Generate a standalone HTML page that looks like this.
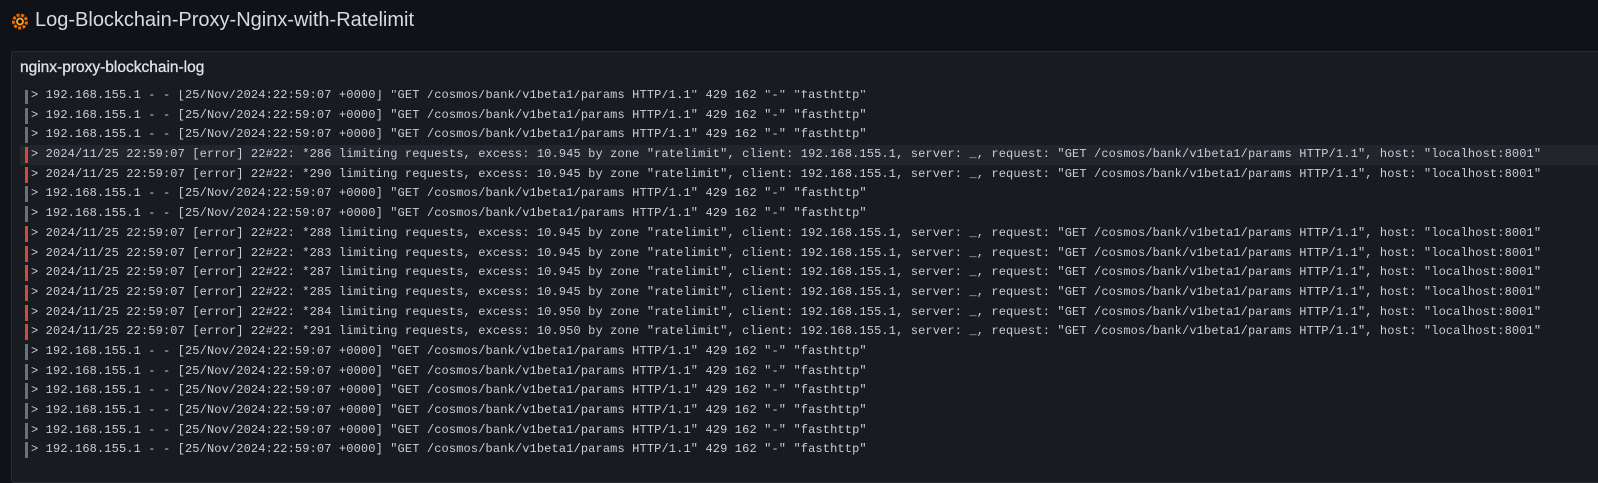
<!DOCTYPE html>
<html><head><style>
body{margin:0;width:1598px;height:470px;background:#111217;overflow:hidden;font-family:"Liberation Sans",sans-serif;color:#ccccdc}
.hdr{position:absolute;left:35px;top:9px;font-size:20px;color:#d8d9e3}
.icon{position:absolute;left:11px;top:12px}
.panel{position:absolute;left:11px;top:51px;width:1600px;height:430px;background:#181b1f;border:1px solid #2a2c33;border-radius:3px}
.ptitle{position:absolute;left:8px;top:7px;font-size:15.5px;color:#e0e1ea;-webkit-text-stroke:0.3px #e0e1ea}
.logs{position:absolute;left:0;top:38px;width:100%;height:371px;overflow:hidden}
.row{position:relative;height:19.7px;line-height:19.7px;font-family:"Liberation Mono",monospace;font-size:12px;letter-spacing:0.13px;color:#ccccdc;white-space:pre;padding-left:11px;margin-left:8px}
.row::before{content:"";position:absolute;left:5px;top:2px;width:3px;height:16px;background:#6e7079}
.row.e::before{background:#d44a3a}
.row.hl{background:#22252b}
.wrap{position:relative;top:-4px}
</style></head><body>
<svg class="icon" width="18" height="18" viewBox="0 0 18 18"><circle cx="9" cy="9.5" r="6.5" fill="none" stroke="#f46800" stroke-width="3" stroke-dasharray="3 1.5"/><circle cx="9" cy="9.5" r="3" fill="none" stroke="#fbb017" stroke-width="1.8"/></svg>
<div class="hdr">Log-Blockchain-Proxy-Nginx-with-Ratelimit</div>
<div class="panel"><div class="ptitle">nginx-proxy-blockchain-log</div>
<div class="logs"><div class="wrap">
<div class="row">&gt; 192.168.155.1 - - [25/Nov/2024:22:59:07 +0000] "GET /cosmos/bank/v1beta1/params HTTP/1.1" 429 162 "-" "fasthttp"</div>
<div class="row">&gt; 192.168.155.1 - - [25/Nov/2024:22:59:07 +0000] "GET /cosmos/bank/v1beta1/params HTTP/1.1" 429 162 "-" "fasthttp"</div>
<div class="row">&gt; 192.168.155.1 - - [25/Nov/2024:22:59:07 +0000] "GET /cosmos/bank/v1beta1/params HTTP/1.1" 429 162 "-" "fasthttp"</div>
<div class="row e hl">&gt; 2024/11/25 22:59:07 [error] 22#22: *286 limiting requests, excess: 10.945 by zone "ratelimit", client: 192.168.155.1, server: _, request: "GET /cosmos/bank/v1beta1/params HTTP/1.1", host: "localhost:8001"</div>
<div class="row e">&gt; 2024/11/25 22:59:07 [error] 22#22: *290 limiting requests, excess: 10.945 by zone "ratelimit", client: 192.168.155.1, server: _, request: "GET /cosmos/bank/v1beta1/params HTTP/1.1", host: "localhost:8001"</div>
<div class="row">&gt; 192.168.155.1 - - [25/Nov/2024:22:59:07 +0000] "GET /cosmos/bank/v1beta1/params HTTP/1.1" 429 162 "-" "fasthttp"</div>
<div class="row">&gt; 192.168.155.1 - - [25/Nov/2024:22:59:07 +0000] "GET /cosmos/bank/v1beta1/params HTTP/1.1" 429 162 "-" "fasthttp"</div>
<div class="row e">&gt; 2024/11/25 22:59:07 [error] 22#22: *288 limiting requests, excess: 10.945 by zone "ratelimit", client: 192.168.155.1, server: _, request: "GET /cosmos/bank/v1beta1/params HTTP/1.1", host: "localhost:8001"</div>
<div class="row e">&gt; 2024/11/25 22:59:07 [error] 22#22: *283 limiting requests, excess: 10.945 by zone "ratelimit", client: 192.168.155.1, server: _, request: "GET /cosmos/bank/v1beta1/params HTTP/1.1", host: "localhost:8001"</div>
<div class="row e">&gt; 2024/11/25 22:59:07 [error] 22#22: *287 limiting requests, excess: 10.945 by zone "ratelimit", client: 192.168.155.1, server: _, request: "GET /cosmos/bank/v1beta1/params HTTP/1.1", host: "localhost:8001"</div>
<div class="row e">&gt; 2024/11/25 22:59:07 [error] 22#22: *285 limiting requests, excess: 10.945 by zone "ratelimit", client: 192.168.155.1, server: _, request: "GET /cosmos/bank/v1beta1/params HTTP/1.1", host: "localhost:8001"</div>
<div class="row e">&gt; 2024/11/25 22:59:07 [error] 22#22: *284 limiting requests, excess: 10.950 by zone "ratelimit", client: 192.168.155.1, server: _, request: "GET /cosmos/bank/v1beta1/params HTTP/1.1", host: "localhost:8001"</div>
<div class="row e">&gt; 2024/11/25 22:59:07 [error] 22#22: *291 limiting requests, excess: 10.950 by zone "ratelimit", client: 192.168.155.1, server: _, request: "GET /cosmos/bank/v1beta1/params HTTP/1.1", host: "localhost:8001"</div>
<div class="row">&gt; 192.168.155.1 - - [25/Nov/2024:22:59:07 +0000] "GET /cosmos/bank/v1beta1/params HTTP/1.1" 429 162 "-" "fasthttp"</div>
<div class="row">&gt; 192.168.155.1 - - [25/Nov/2024:22:59:07 +0000] "GET /cosmos/bank/v1beta1/params HTTP/1.1" 429 162 "-" "fasthttp"</div>
<div class="row">&gt; 192.168.155.1 - - [25/Nov/2024:22:59:07 +0000] "GET /cosmos/bank/v1beta1/params HTTP/1.1" 429 162 "-" "fasthttp"</div>
<div class="row">&gt; 192.168.155.1 - - [25/Nov/2024:22:59:07 +0000] "GET /cosmos/bank/v1beta1/params HTTP/1.1" 429 162 "-" "fasthttp"</div>
<div class="row">&gt; 192.168.155.1 - - [25/Nov/2024:22:59:07 +0000] "GET /cosmos/bank/v1beta1/params HTTP/1.1" 429 162 "-" "fasthttp"</div>
<div class="row">&gt; 192.168.155.1 - - [25/Nov/2024:22:59:07 +0000] "GET /cosmos/bank/v1beta1/params HTTP/1.1" 429 162 "-" "fasthttp"</div>
<div class="row">&gt; 192.168.155.1 - - [25/Nov/2024:22:59:07 +0000] "GET /cosmos/bank/v1beta1/params HTTP/1.1" 429 162 "-" "fasthttp"</div>
</div></div></div>
</body></html>
